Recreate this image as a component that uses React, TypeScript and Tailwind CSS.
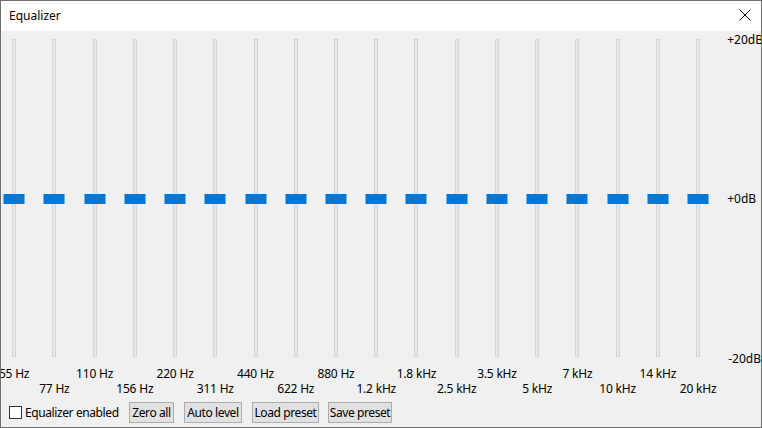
const bands = [
  '55 Hz', '77 Hz', '110 Hz', '156 Hz', '220 Hz', '311 Hz', '440 Hz', '622 Hz', '880 Hz',
  '1.2 kHz', '1.8 kHz', '2.5 kHz', '3.5 kHz', '5 kHz', '7 kHz', '10 kHz', '14 kHz', '20 kHz',
]

const buttons = [
  { label: 'Zero all', w: 'w-[45px] mr-[10px]' },
  { label: 'Auto level', w: 'w-[58px] mr-[10px]' },
  { label: 'Load preset', w: 'w-[67px] mr-[9px]' },
  { label: 'Save preset', w: 'w-[64px]' },
]

function Slider({ label, low }: { label: string; low: boolean }) {
  return (
    <div className="w-[40.24px] shrink-0 flex flex-col items-center">
      <div className="relative mt-[8px] h-[318px] w-full flex justify-center">
        <div className="w-[4px] h-full bg-[#e7e7e7] border border-[#d6d6d6]" />
        <div className="absolute top-[155px] left-1/2 -translate-x-1/2 w-[21px] h-[10px] bg-[#0078d7]" />
      </div>
      <div className={`h-[40px] w-full flex justify-center ${low ? 'pt-[24px]' : 'pt-[9px]'}`}>
        <span className="whitespace-nowrap leading-[16px] tracking-[-0.2px]">{label}</span>
      </div>
    </div>
  )
}

export default function App() {
  return (
    <div
      className="w-[762px] h-[428px] border border-[#6f6f6f] bg-[#f0f0f0] flex flex-col overflow-hidden text-[12px] text-black"
      style={{ fontFamily: '"Segoe UI", "Noto Sans", sans-serif' }}
    >
      <div className="h-[30px] bg-white flex items-center justify-between pl-[8px] pr-[10px]">
        <span className="text-[12px]">Equalizer</span>
        <svg width="12" height="12" viewBox="0 0 12 12" className="mt-[-2px]">
          <path d="M0.5 0.5 L11.5 11.5 M11.5 0.5 L0.5 11.5" stroke="#000" strokeWidth="1" />
        </svg>
      </div>

      <div className="flex ml-[-7px] overflow-hidden">
        {bands.map((b, i) => (
          <Slider key={b} label={b} low={i % 2 === 1} />
        ))}
        <div className="ml-[9px] flex flex-col leading-[16px]">
          <span className="mt-[1px]">+20dB</span>
          <span className="mt-[143px]">+0dB</span>
          <span className="mt-[144px] ml-[1px]">-20dB</span>
        </div>
      </div>

      <div className="flex items-center mt-[5px] pl-[8px] tracking-[-0.4px]">
        <label className="w-[120px] flex items-center gap-[3px]">
          <span className="w-[13px] h-[13px] border border-[#333] bg-white shrink-0" />
          <span className="leading-[16px] whitespace-nowrap">Equalizer enabled</span>
        </label>
        <div className="flex">
          {buttons.map(b => (
            <button
              key={b.label}
              className={`${b.w} h-[21px] bg-[#e1e1e1] border border-[#adadad] text-[12px] leading-[16px] whitespace-nowrap flex items-center justify-center`}
            >
              {b.label}
            </button>
          ))}
        </div>
      </div>
    </div>
  )
}
